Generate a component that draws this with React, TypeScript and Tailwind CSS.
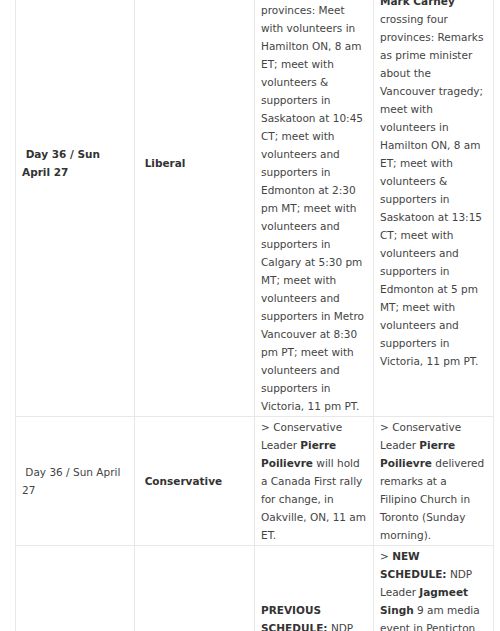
import React from "react";

type Seg = string | { b: string };
type Line = Seg[];

const B = (t: string) => ({ b: t });

function Lines({ lines }: { lines: Line[] }) {
  return (
    <div>
      {lines.map((ln, i) => (
        <div key={i} className="whitespace-pre">
          {ln.map((s, j) =>
            typeof s === "string" ? (
              <span key={j}>{s}</span>
            ) : (
              <strong key={j} className="font-bold text-[#333]">
                {s.b}
              </strong>
            )
          )}
        </div>
      ))}
    </div>
  );
}

function Cell({ lines, fill = false }: { lines: Line[]; fill?: boolean }) {
  return (
    <div
      className={`flex flex-col ${fill ? "justify-start" : "justify-center"} border-r border-b border-[#e8e8e8] px-[6px] py-[1px]`}
    >
      <Lines lines={lines} />
    </div>
  );
}

const row1: Line[][] = [
  [[B("\u00a0Day 36 / Sun")], [B("April 27")]],
  [[B("\u00a0Liberal")]],
  [
    ["> ", B("PREVIOUS")],
    [B("SCHEDULE:"), " Liberal"],
    ["Leader ", B("Mark")],
    [B("Carney"), " crossing"],
    ["four"],
    ["provinces: Meet"],
    ["with volunteers in"],
    ["Hamilton ON, 8 am"],
    ["ET; meet with"],
    ["volunteers &"],
    ["supporters in"],
    ["Saskatoon at 10:45"],
    ["CT; meet with"],
    ["volunteers and"],
    ["supporters in"],
    ["Edmonton at 2:30"],
    ["pm MT; meet with"],
    ["volunteers and"],
    ["supporters in"],
    ["Calgary at 5:30 pm"],
    ["MT; meet with"],
    ["volunteers and"],
    ["supporters in Metro"],
    ["Vancouver at 8:30"],
    ["pm PT; meet with"],
    ["volunteers and"],
    ["supporters in"],
    ["Victoria, 11 pm PT."],
  ],
  [
    ["> ", B("UPDATED")],
    [B("SCHEDULE:"), " Leader"],
    [B("Mark Carney")],
    ["crossing four"],
    ["provinces: Remarks"],
    ["as prime minister"],
    ["about the"],
    ["Vancouver tragedy;"],
    ["meet with"],
    ["volunteers in"],
    ["Hamilton ON, 8 am"],
    ["ET; meet with"],
    ["volunteers &"],
    ["supporters in"],
    ["Saskatoon at 13:15"],
    ["CT; meet with"],
    ["volunteers and"],
    ["supporters in"],
    ["Edmonton at 5 pm"],
    ["MT; meet with"],
    ["volunteers and"],
    ["supporters in"],
    ["Victoria, 11 pm PT."],
  ],
];

const row2: Line[][] = [
  [["\u00a0Day 36 / Sun April"], ["27"]],
  [[B("\u00a0Conservative")]],
  [
    ["> Conservative"],
    ["Leader ", B("Pierre")],
    [B("Poilievre"), " will hold"],
    ["a Canada First rally"],
    ["for change, in"],
    ["Oakville, ON, 11 am"],
    ["ET."],
  ],
  [
    ["> Conservative"],
    ["Leader ", B("Pierre")],
    [B("Poilievre"), " delivered"],
    ["remarks at a"],
    ["Filipino Church in"],
    ["Toronto (Sunday"],
    ["morning)."],
  ],
];

const row3: Line[][] = [
  [["\u00a0Day 36 / Sun April"], ["27"]],
  [[B("\u00a0NDP")]],
  [
    [B("PREVIOUS")],
    [B("SCHEDULE:"), " NDP"],
    ["Leader ", B("Jagmeet")],
    [B("Singh"), " 9 am"],
    ["media event in"],
    ["Penticton, B.C.;"],
    ["town hall in"],
    ["Kelowna, 1 pm PT."],
  ],
  [
    ["> ", B("NEW")],
    [B("SCHEDULE:"), " NDP"],
    ["Leader ", B("Jagmeet")],
    [B("Singh"), " 9 am media"],
    ["event in Penticton"],
    ["B.C.; meet with"],
    ["volunteers and"],
    ["supporters in"],
    ["Kelowna, 11:30 am"],
    ["PT; rally in"],
    ["Surrey, 4 pm PT;"],
    ["meet with"],
    ["supporters in"],
    ["Burnaby, 7 pm PT."],
  ],
];

export default function App() {
  const rows = [row1, row2, row3];
  return (
    <div className="h-[631px] w-[500px] overflow-hidden bg-white font-['DejaVu_Sans',sans-serif] text-[10.5px] leading-[18px] text-[#444]">
      <div className="ml-[15px] -mt-[91px] grid w-[479px] grid-cols-[119px_120px_119px_120px] border-l border-t border-[#e8e8e8]">
        {rows.map((r, ri) =>
          r.map((c, ci) => (
            <Cell key={`${ri}-${ci}`} lines={c} fill={ri === 0 && ci === 2} />
          ))
        )}
      </div>
    </div>
  );
}
